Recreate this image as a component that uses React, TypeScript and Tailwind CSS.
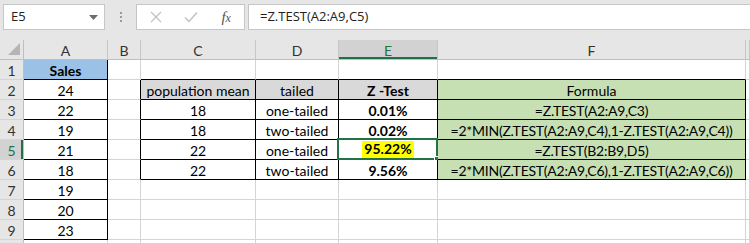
import React from "react";

type CellDef = { t?: string; bold?: boolean; bg?: string; hl?: boolean; tight?: boolean };

const colLetters = ["A", "B", "C", "D", "E", "F", "G"];

const data: Record<string, CellDef> = {
  A1: { t: "Sales", bold: true, bg: "bg-[#9bc2e6]" },
  A2: { t: "24" },
  A3: { t: "22" },
  A4: { t: "19" },
  A5: { t: "21" },
  A6: { t: "18" },
  A7: { t: "19" },
  A8: { t: "20" },
  A9: { t: "23" },
  C2: { t: "population mean", bg: "bg-[#d9d9d9]" },
  D2: { t: "tailed", bg: "bg-[#d9d9d9]" },
  E2: { t: "Z -Test", bold: true, bg: "bg-[#d9d9d9]" },
  F2: { t: "Formula", bg: "bg-[#c6e0b4]" },
  C3: { t: "18" },
  D3: { t: "one-tailed" },
  E3: { t: "0.01%", bold: true },
  F3: { t: "=Z.TEST(A2:A9,C3)", bg: "bg-[#c6e0b4]", tight: true },
  C4: { t: "18" },
  D4: { t: "two-tailed" },
  E4: { t: "0.02%", bold: true },
  F4: { t: "=2*MIN(Z.TEST(A2:A9,C4),1-Z.TEST(A2:A9,C4))", bg: "bg-[#c6e0b4]", tight: true },
  C5: { t: "22" },
  D5: { t: "one-tailed" },
  E5: { t: "95.22%", bold: true, hl: true },
  F5: { t: "=Z.TEST(B2:B9,D5)", bg: "bg-[#c6e0b4]", tight: true },
  C6: { t: "22" },
  D6: { t: "two-tailed" },
  E6: { t: "9.56%", bold: true },
  F6: { t: "=2*MIN(Z.TEST(A2:A9,C6),1-Z.TEST(A2:A9,C6))", bg: "bg-[#c6e0b4]", tight: true },
};

function isBordered(r: number, c: number) {
  if (c === 0 && r >= 1 && r <= 9) return true;
  if (c >= 2 && c <= 5 && r >= 2 && r <= 6) return true;
  return false;
}

const rows = [1, 2, 3, 4, 5, 6, 7, 8, 9, 10];

function Cell({ r, c }: { r: number; c: number }) {
  const key = colLetters[c] + r;
  const d = data[key] || {};
  const rightBlack = isBordered(r, c) || isBordered(r, c + 1);
  const bottomBlack = isBordered(r, c) || isBordered(r + 1, c);
  const selected = key === "E5";
  return (
    <div
      className={`relative flex h-[20px] items-center justify-center overflow-visible whitespace-nowrap border-r border-b text-[14px] leading-none text-black ${
        rightBlack ? "border-r-black" : "border-r-[#d4d4d4]"
      } ${bottomBlack ? "border-b-black" : "border-b-[#d4d4d4]"} ${d.bg ?? "bg-white"} ${d.bold ? "font-bold" : "font-normal"} ${
        d.tight ? "tracking-[-0.25px]" : "tracking-normal"
      }`}
    >
      {d.t ? (
        d.hl ? (
          <span className="bg-[#ffff00] px-[2px] pt-[1px] pb-[2px]">{d.t}</span>
        ) : (
          <span className="pt-[2px]">{d.t}</span>
        )
      ) : null}
      {selected && (
        <>
          <div className="pointer-events-none absolute -top-[2px] -left-[2px] -right-[1px] -bottom-[1px] border-2 border-[#217346]" />
          <div className="absolute -right-[3px] -bottom-[3px] h-[6px] w-[6px] border border-white bg-[#217346]" />
        </>
      )}
    </div>
  );
}

function RowHeader({ r }: { r: number }) {
  const sel = r === 5;
  return (
    <div
      className={`flex h-[20px] items-center justify-center border-r border-b border-r-[#bfbfbf] border-b-[#d4d4d4] pt-[1px] text-[14px] ${
        sel ? "bg-[#d2d2d2] text-[#217346] shadow-[inset_-2px_0_0_#217346]" : "bg-[#e6e6e6] text-[#333]"
      }`}
    >
      {r < 10 ? r : ""}
    </div>
  );
}

function ColHeader({ c }: { c: number }) {
  const sel = c === 4;
  return (
    <div
      className={`flex h-[20px] items-center justify-center border-r border-b border-r-[#c6c6c6] border-b-[#bfbfbf] pt-[1px] text-[14px] ${
        sel ? "bg-[#d2d2d2] text-[#217346] shadow-[inset_0_-2px_0_#217346]" : "bg-[#e6e6e6] text-[#333]"
      }`}
    >
      {c < 6 ? colLetters[c] : ""}
    </div>
  );
}

export default function App() {
  return (
    <div className="h-[243px] w-[750px] overflow-hidden bg-[#e6e6e6] font-['Lato',sans-serif]">
      {/* toolbar */}
      <div className="flex h-[40px] items-start bg-[#e6e6e6] pt-[4px]">
        <div className="ml-[3px] flex h-[26px] w-[102px] items-center justify-between border border-[#c6c6c6] bg-white pl-[7px] pr-[6px] font-['Open_Sans',sans-serif] text-[13px] text-[#222]">
          <span>E5</span>
          <svg width="9" height="5" viewBox="0 0 9 5">
            <path d="M0 0 L9 0 L4.5 5 Z" fill="#6d6d6d" />
          </svg>
        </div>
        <div className="flex h-[26px] w-[31px] flex-col items-center justify-center gap-[2px]">
          <div className="h-[2px] w-[2px] bg-[#9a9a9a]" />
          <div className="h-[2px] w-[2px] bg-[#9a9a9a]" />
          <div className="h-[2px] w-[2px] bg-[#9a9a9a]" />
        </div>
        <div className="flex h-[26px] w-[109px] items-center border border-[#c6c6c6] bg-white">
          <div className="flex w-[36px] justify-center pl-[2px]">
            <svg width="12" height="12" viewBox="0 0 12 12">
              <path d="M1 1 L11 11 M11 1 L1 11" stroke="#c2c2c2" strokeWidth="1.3" />
            </svg>
          </div>
          <div className="flex w-[36px] justify-center">
            <svg width="14" height="12" viewBox="0 0 14 12">
              <path d="M1 6.5 L5 10.5 L13 1.5" stroke="#c2c2c2" strokeWidth="1.5" fill="none" />
            </svg>
          </div>
          <div className="flex w-[36px] items-baseline justify-center font-['Liberation_Serif',serif] italic leading-none text-[#555]">
            <span className="text-[15px]">f</span>
            <span className="text-[12px]">x</span>
          </div>
        </div>
        <div className="ml-[3px] flex h-[26px] flex-1 items-center border-y border-l border-[#c6c6c6] bg-white pl-[11px] font-['Open_Sans',sans-serif] text-[13px] text-[#222]">
          =Z.TEST(A2:A9,C5)
        </div>
      </div>
      {/* grid */}
      <div className="grid grid-cols-[24px_84px_33px_115px_83px_99px_308px_1fr] bg-white">
        <div className="relative flex h-[20px] items-end justify-end border-r border-b border-r-[#bfbfbf] border-b-[#bfbfbf] bg-[#e6e6e6] pr-[3px] pb-[4px]">
          <svg width="12" height="12" viewBox="0 0 12 12">
            <path d="M12 0 L12 12 L0 12 Z" fill="#b5b5b5" />
          </svg>
        </div>
        {[0, 1, 2, 3, 4, 5, 6].map((c) => (
          <ColHeader key={c} c={c} />
        ))}
        {rows.map((r) => (
          <React.Fragment key={r}>
            <RowHeader r={r} />
            {[0, 1, 2, 3, 4, 5, 6].map((c) => (
              <Cell key={c} r={r} c={c} />
            ))}
          </React.Fragment>
        ))}
      </div>
    </div>
  );
}
